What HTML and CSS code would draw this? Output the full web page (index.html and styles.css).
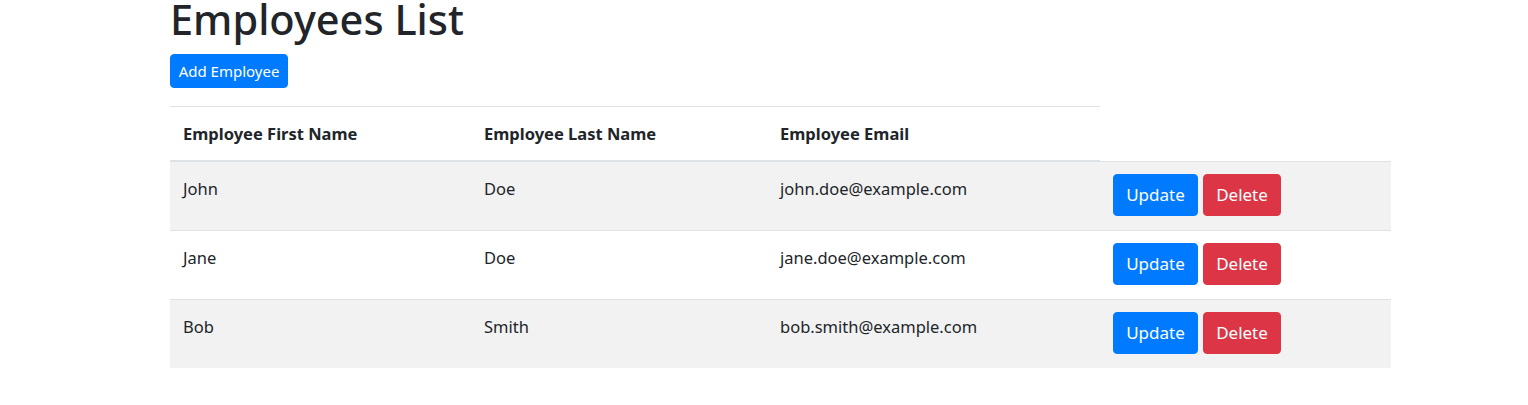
FILE: index.html
```html
<!DOCTYPE html>
<html lang="en">
<head>
<meta charset="utf-8">
<title>Employees List</title>
<link rel="stylesheet" href="styles.css">
</head>
<body>
<div class="container">
  <h1 class="title">Employees List</h1>
  <div class="toolbar">
    <button class="btn btn-primary btn-add">Add Employee</button>
  </div>
  <table class="table">
    <colgroup>
      <col class="c1"><col class="c2"><col class="c3"><col class="c4">
    </colgroup>
    <thead>
      <tr>
        <th>Employee First Name</th>
        <th>Employee Last Name</th>
        <th>Employee Email</th>
      </tr>
    </thead>
    <tbody>
      <tr class="odd">
        <td>John</td>
        <td>Doe</td>
        <td>john.doe@example.com</td>
        <td class="actions"><div class="btns"><button class="btn btn-primary btn-row">Update</button><button class="btn btn-danger btn-row">Delete</button></div></td>
      </tr>
      <tr>
        <td>Jane</td>
        <td>Doe</td>
        <td>jane.doe@example.com</td>
        <td class="actions"><div class="btns"><button class="btn btn-primary btn-row">Update</button><button class="btn btn-danger btn-row">Delete</button></div></td>
      </tr>
      <tr class="odd">
        <td>Bob</td>
        <td>Smith</td>
        <td>bob.smith@example.com</td>
        <td class="actions"><div class="btns"><button class="btn btn-primary btn-row">Update</button><button class="btn btn-danger btn-row">Delete</button></div></td>
      </tr>
    </tbody>
  </table>
</div>
</body>
</html>
```
FILE: styles.css
```css
html, body {
  margin: 0;
  padding: 0;
  background: #fff;
}
body {
  font-family: "Noto Sans", "Open Sans", sans-serif;
  font-size: 16.5px;
  color: #212529;
}
.container {
  margin-left: 170px;
  width: 1221px;
}
.title {
  margin: 0;
  font-size: 41.5px;
  font-weight: 500;
  line-height: 38px;
  color: #212529;
}
.toolbar {
  margin-top: 16px;
  height: 34px;
  margin-bottom: 18px;
}
.btn {
  font-family: inherit;
  border: 1px solid transparent;
  border-radius: 4px;
  color: #fff;
  cursor: pointer;
  display: inline-flex;
  align-items: center;
  justify-content: center;
  padding: 0;
  margin: 0;
}
.btn-primary { background: #007bff; border-color: #007bff; }
.btn-danger { background: #dc3545; border-color: #dc3545; }
.btn-add {
  height: 34px;
  width: 118px;
  font-size: 15px;
}
.table {
  border-collapse: collapse;
  table-layout: fixed;
  width: 1221px;
}
.c1 { width: 301px; }
.c2 { width: 296px; }
.c3 { width: 333px; }
.c4 { width: 291px; }
.table th {
  text-align: left;
  font-weight: 700;
  font-size: 16.5px;
  line-height: 24px;
  padding: 0 12px 0 13px;
  height: 53px;
  vertical-align: middle;
  border-top: 1px solid #dee2e6;
  border-bottom: 2px solid #dee2e6;
}
.table td {
  vertical-align: top;
  padding: 15px 12px 0 13px;
  line-height: 24px;
  border-top: 1px solid #dee2e6;
}
.table tbody tr.odd td {
  background: #f2f2f2;
}
.table td.actions {
  padding: 12px 12px 14px 13px;
}
.btns {
  display: flex;
  gap: 5px;
}
.btn-row {
  height: 42px;
  font-size: 17px;
  line-height: 24px;
}
.btn-primary.btn-row { width: 85px; }
.btn-danger.btn-row { width: 78px; }
```
